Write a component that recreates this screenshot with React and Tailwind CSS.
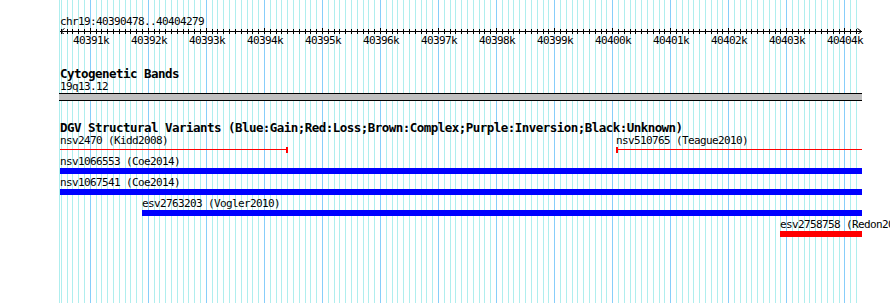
import React from "react";

const START = 40390478;
const END = 40404279;
const SCALE = 0.05804;
const TRACK_W = 802;

const px = (bp) => Math.floor((Math.max(bp, START) - START) * SCALE);

const minorTicks = [];
const majorTicks = [];
for (let bp = Math.ceil(START / 100) * 100; bp <= END; bp += 100) {
  if (bp % 1000 === 0) majorTicks.push(bp);
  else minorTicks.push(bp);
}

const features = [
  [
    { name: "nsv2470 (Kidd2008)", start: START - 500, end: 40394423, type: "line", color: "#ff0000" },
    { name: "nsv510765 (Teague2010)", start: 40400058, end: END + 500, type: "line", color: "#ff0000" },
  ],
  [{ name: "nsv1066553 (Coe2014)", start: START - 500, end: END + 500, type: "bar", color: "#0000ff" }],
  [{ name: "nsv1067541 (Coe2014)", start: START - 500, end: END + 500, type: "bar", color: "#0000ff" }],
  [{ name: "esv2763203 (Vogler2010)", start: 40391891, end: END + 500, type: "bar", color: "#0000ff" }],
  [{ name: "esv2758758 (Redon2009)", start: 40402900, end: END + 500, type: "bar", color: "#ff0000" }],
];

function Grid() {
  return (
    <svg className="absolute left-[-1px] top-0" width="803" height="303">
      <line x1="0.5" y1="0" x2="0.5" y2="303" stroke="#afeeee" />
      {minorTicks.map((bp) => (
        <line key={bp} x1={px(bp) + 1.5} y1="0" x2={px(bp) + 1.5} y2="303" stroke="#afeeee" />
      ))}
      {majorTicks.map((bp) => (
        <line key={bp} x1={px(bp) + 1.5} y1="0" x2={px(bp) + 1.5} y2="303" stroke="#87cefa" />
      ))}
    </svg>
  );
}

function Ruler() {
  const end = px(END);
  return (
    <div>
      <svg width={TRACK_W + 2} height="6" className="block">
        <line x1="0" y1="3.5" x2={end + 1} y2="3.5" stroke="#000" />
        <path d="M0.5 3.5 L4.5 0.5 M0.5 3.5 L4.5 6.5" stroke="#000" fill="none" />
        <path d={`M${end + 0.5} 3.5 L${end - 3.5} 0.5 M${end + 0.5} 3.5 L${end - 3.5} 6.5`} stroke="#000" fill="none" />
        {minorTicks.map((bp) => (
          <line key={bp} x1={px(bp) + 0.5} y1="1" x2={px(bp) + 0.5} y2="6" stroke="#000" />
        ))}
        {majorTicks.map((bp) => (
          <line key={bp} x1={px(bp) + 0.5} y1="0" x2={px(bp) + 0.5} y2="6" stroke="#000" />
        ))}
      </svg>
      <div className="relative h-[13px]">
        {majorTicks.map((bp) => (
          <span
            key={bp}
            className="absolute top-0 -translate-x-1/2 leading-[13px] whitespace-nowrap"
            style={{ left: px(bp) + 1 }}
          >
            {bp / 1000}k
          </span>
        ))}
      </div>
    </div>
  );
}

function FeatureRow({ items }) {
  return (
    <div className="relative h-[21px]">
      {items.map((f) => {
        const left = px(f.start);
        const right = Math.min(px(f.end), TRACK_W);
        const width = right - left;
        return (
          <div key={f.name} className="absolute top-0" style={{ left }}>
            <div className="leading-[13px] h-[13px] whitespace-nowrap">{f.name}</div>
            {f.type === "bar" ? (
              <div className="h-[6px]" style={{ width, backgroundColor: f.color }} />
            ) : (
              <div className="relative h-[6px]" style={{ width }}>
                <div className="absolute left-0 right-0 top-[2px] h-px" style={{ backgroundColor: f.color }} />
                {f.start >= START && (
                  <div className="absolute left-0 top-0 h-[6px] w-[2px]" style={{ backgroundColor: f.color }} />
                )}
                {f.end <= END && (
                  <div className="absolute right-0 top-0 h-[6px] w-[2px]" style={{ backgroundColor: f.color }} />
                )}
              </div>
            )}
          </div>
        );
      })}
    </div>
  );
}

export default function App() {
  return (
    <div
      className="relative w-[890px] h-[303px] overflow-hidden bg-white text-black text-[11px] tracking-[-0.62px]"
      style={{ fontFamily: '"DejaVu Sans Mono", "Liberation Mono", monospace' }}
    >
      <div className="relative ml-[60px] w-[802px] h-full">
        <Grid />
        <div className="relative pt-[15px]">
          <div className="h-[13px] leading-[13px]">chr19:40390478..40404279</div>
          <Ruler />

          <div className="mt-[21px] h-[12px] leading-[12px] font-bold text-[12.5px] tracking-[-0.53px]">
            Cytogenetic Bands
          </div>
          <div className="h-[13px] leading-[13px]">19q13.12</div>
          <div className="-ml-px w-[803px] h-[8px] bg-[#c0c0c0] border-y border-black" />

          <div className="mt-[20px] h-[13px] leading-[13px] font-bold text-[12.5px] tracking-[-0.53px] whitespace-nowrap">
            DGV Structural Variants (Blue:Gain;Red:Loss;Brown:Complex;Purple:Inversion;Black:Unknown)
          </div>
          {features.map((row, i) => (
            <FeatureRow key={i} items={row} />
          ))}
        </div>
      </div>
    </div>
  );
}
